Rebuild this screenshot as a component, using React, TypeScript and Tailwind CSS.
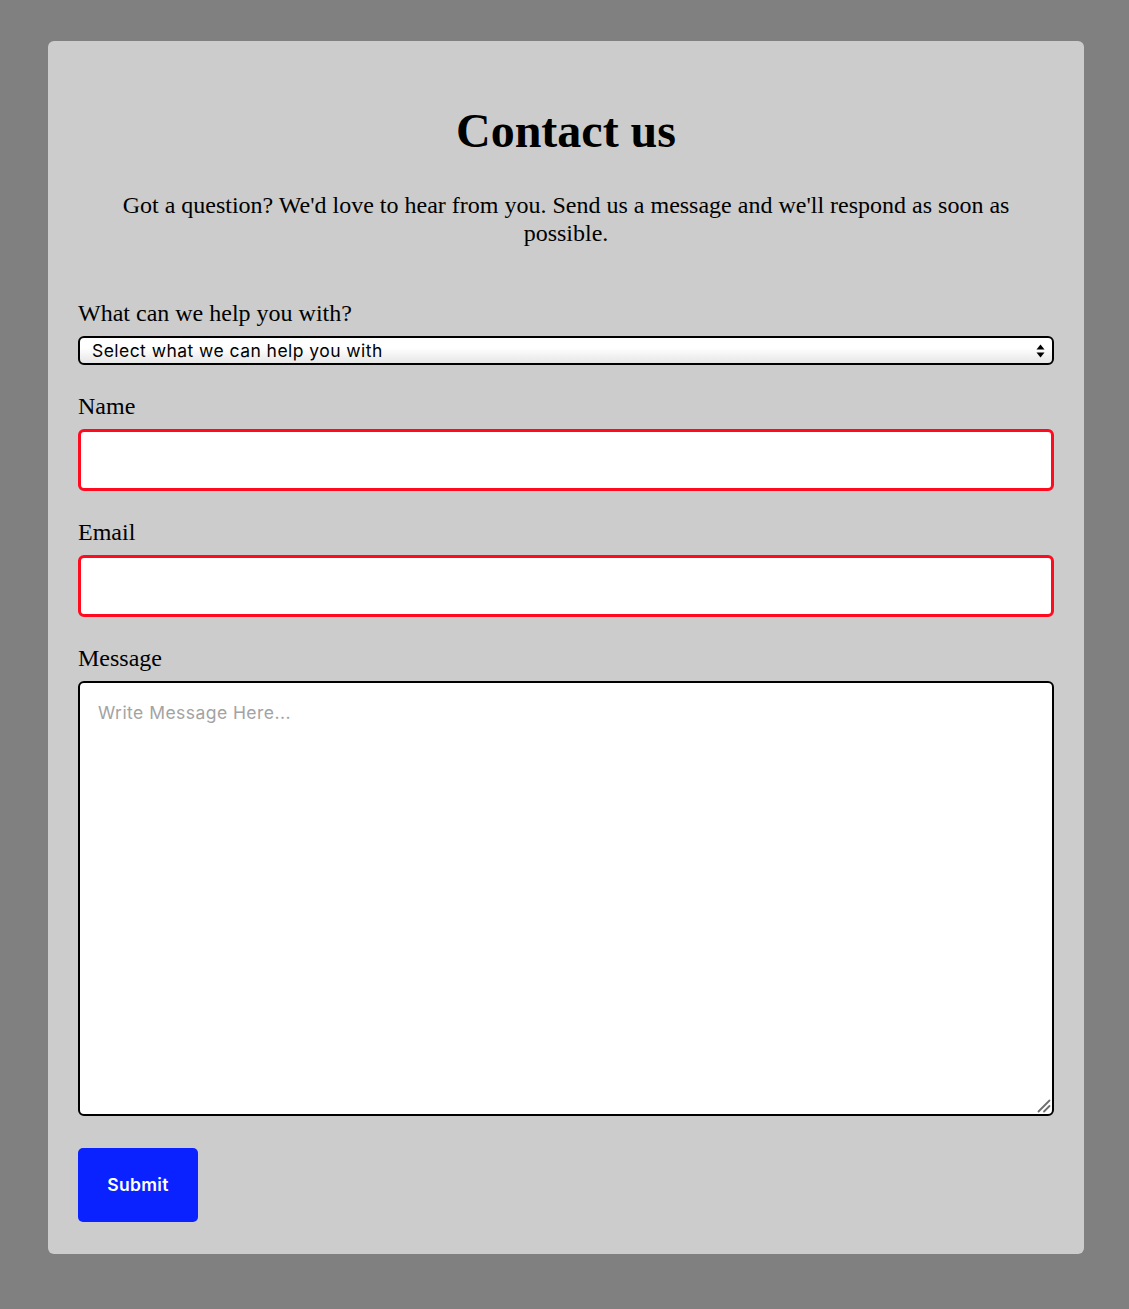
import React from "react";

export default function App() {
  return (
    <div className="min-h-screen w-full bg-[#808080] pt-[41px] pb-[56px]">
      <div className="ml-[48px] w-[1036px] rounded-[6px] bg-[#cccccc] px-[30px] pt-[62px] pb-[32px] text-black [font-family:'Liberation_Serif',serif]">
        <h1 className="text-center text-[48px] font-bold leading-[55px]">Contact us</h1>
        <p className="mt-[33px] px-[10px] text-center text-[24px] leading-[28px]">
          Got a question? We'd love to hear from you. Send us a message and we'll respond as soon as possible.
        </p>
        <form className="mt-[52px] flex flex-col" onSubmit={(e) => e.preventDefault()}>
          <label className="mb-[9px] block text-[24px] leading-[28px]">What can we help you with?</label>
          <div className="relative mb-[27px] h-[29px]">
            <select
              className="h-[29px] w-full appearance-none rounded-[6px] border-2 border-black bg-gradient-to-b from-white from-40% to-[#e6e6e6] pl-[12px] pr-[30px] text-[17.5px] leading-[25px] tracking-[0.45px] text-black [font-family:Inter,sans-serif]"
              defaultValue=""
            >
              <option value="">Select what we can help you with</option>
            </select>
            <svg className="pointer-events-none absolute right-[9px] top-[8px]" width="9" height="14" viewBox="0 0 9 14">
              <path d="M4.5 0.5 L8.5 5.5 L0.5 5.5 Z" fill="#000" />
              <path d="M4.5 13.5 L8.5 8.5 L0.5 8.5 Z" fill="#000" />
            </svg>
          </div>
          <label className="mb-[9px] block text-[24px] leading-[28px]">Name</label>
          <input type="text" className="mb-[27px] h-[62px] w-full rounded-[6px] border-[3px] border-[#ff0a1e] bg-white px-[16px] outline-none" />
          <label className="mb-[9px] block text-[24px] leading-[28px]">Email</label>
          <input type="email" className="mb-[27px] h-[62px] w-full rounded-[6px] border-[3px] border-[#ff0a1e] bg-white px-[16px] outline-none" />
          <label className="mb-[9px] block text-[24px] leading-[28px]">Message</label>
          <div className="relative mb-[32px]">
            <textarea
              placeholder="Write Message Here..."
              className="block h-[435px] w-full resize-none rounded-[6px] border-2 border-black bg-white px-[18px] pt-[18px] text-[17.5px] leading-[24px] tracking-[0.45px] outline-none placeholder:text-[#a3a3a3] [font-family:Inter,sans-serif]"
            />
            <svg className="pointer-events-none absolute bottom-[3px] right-[3px]" width="14" height="14" viewBox="0 0 14 14">
              <path d="M1.5 12.5 L12.5 1.5" stroke="#6e6e6e" strokeWidth="1.8" strokeLinecap="round" />
              <path d="M7 12.5 L12.5 7" stroke="#6e6e6e" strokeWidth="1.8" strokeLinecap="round" />
            </svg>
          </div>
          <div>
            <button
              type="submit"
              className="h-[74px] w-[120px] rounded-[5px] bg-[#0a22ff] text-[17.5px] font-semibold tracking-[0.3px] text-white [font-family:Inter,sans-serif]"
            >
              Submit
            </button>
          </div>
        </form>
      </div>
    </div>
  );
}
